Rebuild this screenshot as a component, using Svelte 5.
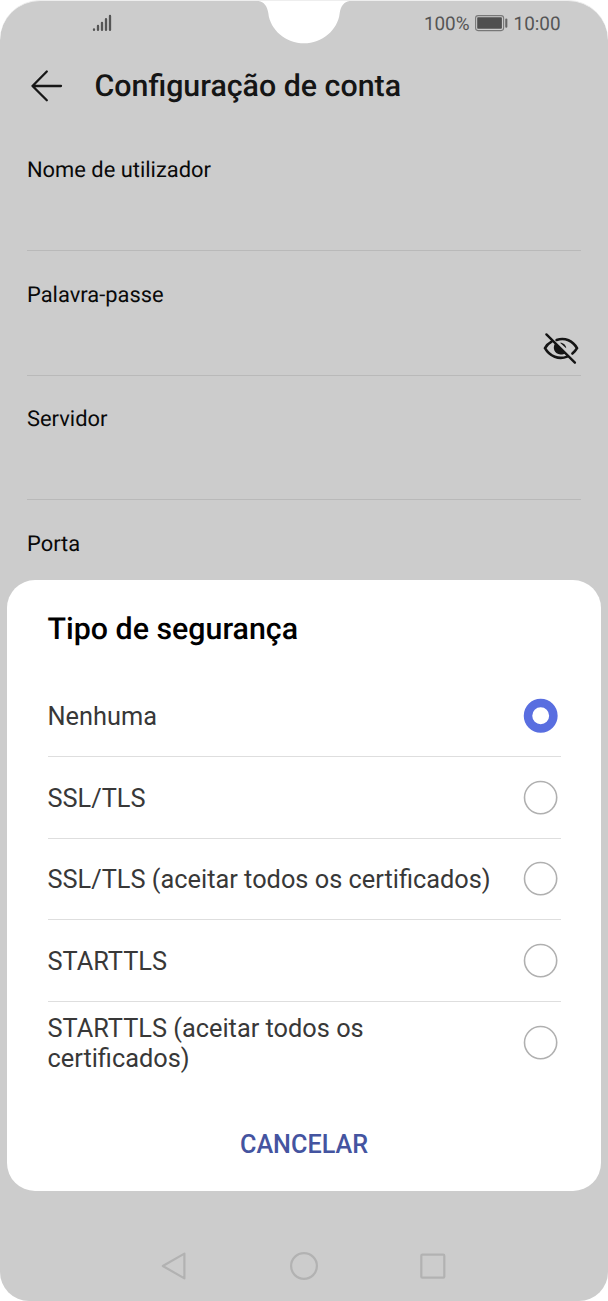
<script>
  const fields = [
    { label: 'Nome de utilizador' },
    { label: 'Palavra-passe', hidden: true },
    { label: 'Servidor' },
    { label: 'Porta' }
  ];
  const options = [
    'Nenhuma',
    'SSL/TLS',
    'SSL/TLS (aceitar todos os certificados)',
    'STARTTLS',
    'STARTTLS (aceitar todos os certificados)'
  ];
  let selected = $state(0);
</script>

<div class="phone">
  <svg class="notch" width="100" height="44" viewBox="0 0 100 44" aria-hidden="true">
    <path d="M0 0V.8H2C9 .8 13 5 14.3 13C16 30 32 43.3 50 43.3S84 30 85.7 13C87 5 91 .8 98 .8H100V0Z" fill="#fff" />
  </svg>

  <div class="status">
    <svg class="signal" width="20" height="18" viewBox="0 0 20 18" fill="none" stroke="#555" stroke-width="2.3" stroke-linecap="round">
      <path d="M2 15.4V15.9M6 12V15.9M10 8.8V15.9M14 5.2V15.9M18 2V15.9" />
    </svg>
    <div class="right">
      <span class="percent">100%</span>
      <svg class="battery" width="34" height="17" viewBox="0 0 34 17" fill="none">
        <rect x=".6" y=".6" width="28" height="15" rx="2.5" stroke="#777" stroke-width="1.1" />
        <rect x="2.2" y="2.2" width="24.7" height="11.5" rx=".8" fill="#4f4f4f" />
        <path d="M31.3 4.6V11.8" stroke="#666" stroke-width="2.1" stroke-linecap="round" />
      </svg>
      <span class="time">10:00</span>
    </div>
  </div>

  <header>
    <svg width="32" height="32" viewBox="0 0 32 32" fill="none" stroke="#171717" stroke-width="2.3" stroke-linecap="round" stroke-linejoin="round">
      <path d="M15.8 1.5L1.5 16L15.8 30.3M1.5 16H30" />
    </svg>
    <h1>Configuração de conta</h1>
  </header>

  <main>
    {#each fields as field}
      <div class="field">
        <span>{field.label}</span>
        {#if field.hidden}
          <svg width="36" height="32" viewBox="0 0 36 32" fill="none" stroke="#151515" stroke-width="2.6" stroke-linecap="round">
            <path d="M3.4 2.4L31.9 30.7" stroke-width="2.4" />
            <path d="M13.6 8C22 5 30 9 34 16.2C33 18 31.3 20 29.4 21.5M8.6 9.6C5.5 11.2 3.3 13.7 2 16.2C6.6 24.5 16 28 24.2 24.6" />
            <path d="M12 11.6C9.2 15.7 11.5 22.3 17.5 22.6C19.4 22.7 21.1 22 22.3 21.2Z" fill="#151515" stroke="none" />
            <path d="M17 10.8C20.5 10.7 22.9 13.2 23.2 16.2Z" fill="#151515" stroke="none" />
          </svg>
        {/if}
      </div>
    {/each}
  </main>

  <section class="dialog" role="dialog" aria-labelledby="dialog-title">
    <h2 id="dialog-title">Tipo de segurança</h2>
    <div class="options">
      {#each options as option, i}
        <button class="option" class:selected={selected === i} onclick={() => (selected = i)}>
          <span class="name">{option}</span>
          <svg class="radio" width="34" height="34" viewBox="0 0 34 34" fill="none">
            {#if selected === i}
              <circle cx="16.7" cy="16.7" r="12.7" stroke="#596ee0" stroke-width="8.5" />
            {:else}
              <circle cx="16.6" cy="16.6" r="16.1" stroke="#b0b0b0" stroke-width="1.6" />
            {/if}
          </svg>
        </button>
      {/each}
    </div>
    <button class="cancel">CANCELAR</button>
  </section>

  <nav>
    <svg width="272" height="32" viewBox="0 0 272 32" fill="none" stroke="#b2b2b2" stroke-width="2.2" stroke-linejoin="round">
      <path d="M24.4 3.6V28.4L2.8 16Z" />
      <circle cx="144" cy="16" r="12.9" />
      <rect x="261.3" y="4.7" width="23" height="23" rx="1" />
    </svg>
  </nav>
</div>

<style>
  :global(body) {
    margin: 0;
    background: #fff;
  }
  .phone, .phone * {
    box-sizing: border-box;
  }
  .phone {
    position: relative;
    width: 608px;
    height: 1301px;
    display: flex;
    flex-direction: column;
    background: #ccc;
    border-top: 1px solid #eee;
    border-radius: 40px 40px 29px 29px;
    overflow: hidden;
    font-family: Roboto, sans-serif;
    text-rendering: geometricPrecision;
  }
  svg {
    display: block;
    flex: none;
    overflow: visible;
  }
  .notch {
    position: absolute;
    top: -1px;
    left: 254px;
  }
  .status {
    height: 46px;
    display: flex;
    align-items: center;
    justify-content: space-between;
    padding: 0 47.4px 2px 92px;
  }
  .right {
    display: flex;
    align-items: center;
    color: #555;
    font-size: 18.9px;
    line-height: 24px;
  }
  .right span {
    padding-top: 2px;
  }
  .battery {
    margin: 0 5px;
  }
  header {
    height: 79.5px;
    display: flex;
    align-items: center;
    gap: 31.5px;
    padding: 0 0 1.5px 31px;
  }
  h1, h2 {
    margin: 0;
    font-weight: 500;
    line-height: 36px;
  }
  h1 {
    padding-top: 2px;
    color: #151515;
    font-size: 30.35px;
  }
  main {
    padding: 0 27px;
    flex: 1;
  }
  .field {
    height: 124.5px;
    display: flex;
    justify-content: space-between;
    align-items: flex-start;
    padding: 30.5px 2.5px 0 0;
    border-bottom: 1px solid #b9b9b9;
    color: #090909;
    font-size: 21.9px;
    line-height: 28px;
  }
  .field svg {
    margin-top: 50.5px;
  }
  .dialog {
    position: absolute;
    left: 7px;
    top: 579px;
    width: 594px;
    height: 610.5px;
    padding: 32px 40.5px 0;
    display: flex;
    flex-direction: column;
    align-items: center;
    border-radius: 28px;
    background: #fff;
  }
  h2 {
    align-self: stretch;
    color: #000;
    font-size: 30.35px;
  }
  .options {
    align-self: stretch;
    margin-top: 27.5px;
  }
  button {
    font: inherit;
    border: 0;
    background: none;
    padding: 0;
  }
  .option {
    width: 100%;
    height: 81.6px;
    display: flex;
    align-items: center;
    justify-content: space-between;
    padding: 1px 3px 0 0;
    border-bottom: 1px solid #dedede;
    color: #383838;
    font-size: 25.35px;
    line-height: 30px;
    text-align: left;
  }
  .option:last-child {
    border: 0;
  }
  .name {
    max-width: 450px;
  }
  .cancel {
    margin-top: 41.5px;
    color: #4454a0;
    font-size: 25.2px;
    font-weight: 500;
    line-height: 40px;
  }
  nav {
    height: 71px;
    padding: 20px 0 0 160px;
  }
</style>
